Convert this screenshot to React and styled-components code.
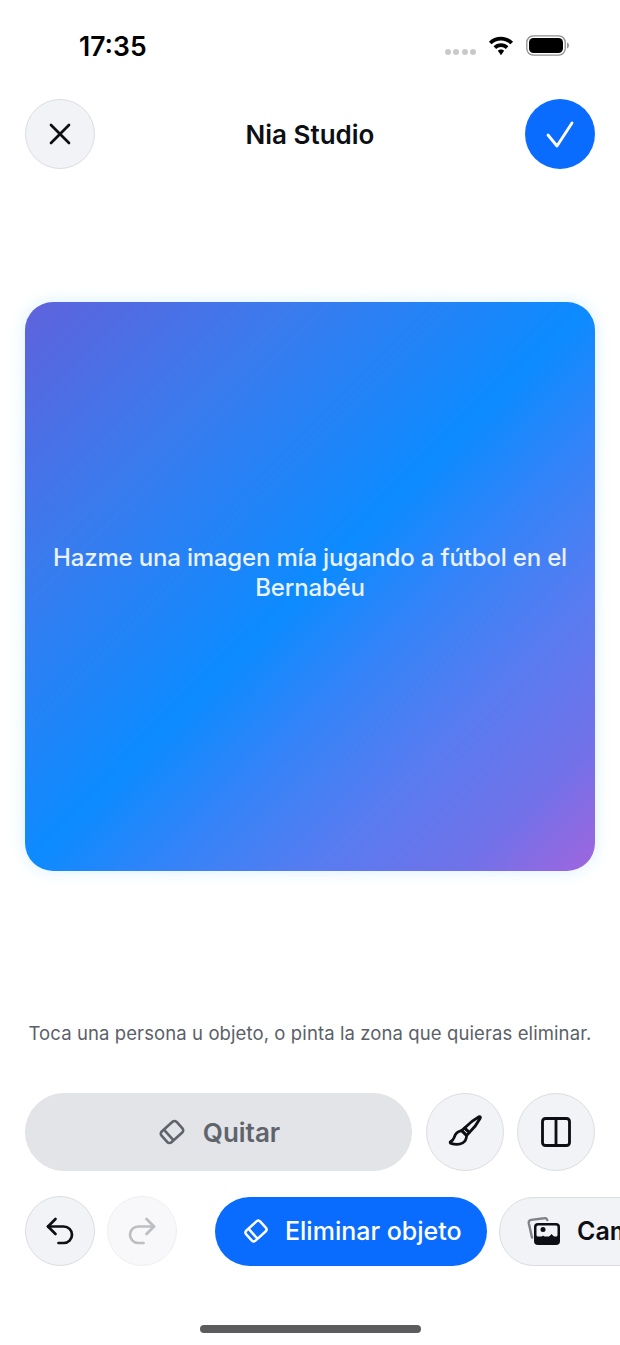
import React from 'react'
import styled, { createGlobalStyle } from 'styled-components'
import { X, Undo2, Redo2, Columns2 } from 'lucide-react'

const Global = createGlobalStyle`
  html, body { margin: 0; padding: 0; background: #fff; }
  * { box-sizing: border-box; }
`

const Screen = styled.div`
  width: 620px;
  height: 1345px;
  overflow: hidden;
  display: flex;
  flex-direction: column;
  background: #fff;
  font-family: Inter, "Liberation Sans", sans-serif;
  color: #0d0f14;
`

const StatusBar = styled.div`
  height: 99px;
  padding: 30px 51px 0 79px;
  display: flex;
  justify-content: space-between;
  align-items: flex-start;
`

const Clock = styled.span`
  font-size: 26.5px;
  line-height: 32px;
  font-weight: 600;
  color: #000;
`

const StatusIcons = styled.div`
  display: flex;
  align-items: center;
  gap: 12px;
  padding-top: 5px;
`

const Dots = styled.div`
  display: flex;
  gap: 2.500px;
  margin-top: 12px;
`

const Dot = styled.span`
  width: 6px;
  height: 6px;
  border-radius: 50%;
  background: #c9c9c9;
`

const Header = styled.header`
  display: flex;
  justify-content: space-between;
  align-items: center;
  padding: 0 25px;
`

const Title = styled.h1`
  margin: 0;
  font-size: 26px;
  font-weight: 600;
`

const Circle = styled.button`
  width: ${p => p.$size || 70}px;
  height: ${p => p.$size || 70}px;
  flex: none;
  padding: 0;
  border-radius: 50%;
  display: flex;
  align-items: center;
  justify-content: center;
  border: 1px solid ${p => (p.$faded ? '#eeeff1' : '#dcdde0')};
  background: ${p => (p.$faded ? '#f8f8fa' : '#f2f3f6')};
  color: ${p => (p.$faded ? '#bcbec2' : '#0d0f14')};
`

const ConfirmCircle = styled(Circle)`
  border: none;
  background: #0a6cff;
  color: #fff;
`

const Canvas = styled.div`
  margin: 133px 25px 0;
  height: 569px;
  border-radius: 28px;
  display: flex;
  align-items: center;
  justify-content: center;
  padding: 0 24px 28px;
  background: linear-gradient(135deg, #5f62dc 0%, #3a7bee 24%, #0c8bff 50%, #3583f8 62%, #5a7bf0 76%, #7072e9 88%, #a065de 100%);
  box-shadow: 0 0 16px rgba(120, 205, 255, 0.3);
`

const Prompt = styled.p`
  margin: 0;
  text-align: center;
  font-size: 24px;
  line-height: 30px;
  font-weight: 500;
  letter-spacing: -0.18px;
  color: #e9f2fd;
`

const Hint = styled.p`
  margin: 151px 0 0;
  text-align: center;
  font-size: 18.500px;
  line-height: 22px;
  color: #5b5f69;
  letter-spacing: 0.1px;
`

const ToolRow = styled.div`
  display: flex;
  align-items: center;
  gap: 13.500px;
  margin-top: 49px;
  padding: 0 25px;
`

const RemoveButton = styled.button`
  flex: 1;
  height: 78px;
  border-radius: 39px;
  display: flex;
  align-items: center;
  justify-content: center;
  gap: 16px;
  padding: 0;
  border: 1px solid #e2e3e5;
  background: #e3e4e8;
  color: #5f636c;
  font: 600 26px Inter, "Liberation Sans", sans-serif;
`

const ActionRow = styled.div`
  display: flex;
  align-items: center;
  gap: 12px;
  margin-top: 25px;
  padding-left: 25px;
`

const Pill = styled.button`
  flex: none;
  width: ${p => (p.$primary ? '272px' : 'auto')};
  height: 69px;
  border-radius: 35px;
  display: flex;
  align-items: center;
  gap: ${p => (p.$primary ? 15 : 17)}px;
  padding: 0 0 0 27px;
  white-space: nowrap;
  font: ${p => (p.$primary ? 500 : 600)} 25px Inter, "Liberation Sans", sans-serif;
  border: ${p => (p.$primary ? 'none' : '1px solid #dcdde0')};
  background: ${p => (p.$primary ? '#0a6cff' : '#f2f3f6')};
  color: ${p => (p.$primary ? '#fff' : '#0d0f14')};
  margin-left: ${p => p.$gapBefore || 0}px;
`

const HomeIndicator = styled.div`
  width: 221px;
  height: 8px;
  border-radius: 4px;
  background: #5c5c5f;
  margin: 59px auto 0;
`

const Wifi = () => (
  <svg width="26" height="20" viewBox="0 0 28 21">
    <path d="M14 0.500C8.900 0.500 4.300 2.500 1 5.800l2.800 2.900C6.400 6.100 10 4.500 14 4.500s7.600 1.600 10.200 4.200L27 5.800C23.700 2.500 19.100 0.500 14 0.500z" fill="#000" />
    <path d="M14 7.500c-3.100 0-5.900 1.200-8 3.300l2.800 2.900c1.400-1.300 3.200-2.200 5.200-2.200s3.800 0.900 5.200 2.200l2.800-2.900c-2.100-2.100-4.900-3.300-8-3.300z" fill="#000" />
    <path d="M14 14.200c-1.300 0-2.500 0.500-3.400 1.400L14 20.500l3.400-4.900c-0.900-0.900-2.100-1.400-3.400-1.400z" fill="#000" />
  </svg>
)

const Battery = () => (
  <svg width="43" height="21" viewBox="0 0 43 21">
    <rect x="0.800" y="0.800" width="38.400" height="19.400" rx="6.500" fill="none" stroke="#8e8e8e" strokeWidth="1.300" />
    <rect x="3" y="3" width="34" height="15" rx="4.500" fill="#000" />
    <path d="M41 7.500c1.300 0.400 2 1.600 2 3s-0.700 2.600-2 3z" fill="#9a9a9a" />
  </svg>
)

const Eraser = ({ size = 30 }) => (
  <svg width={size} height={size} viewBox="0 0 31 30" fill="none" stroke="currentColor" strokeWidth="2.700" strokeLinejoin="round">
    <g transform="rotate(-42 15.500 15)">
      <rect x="5" y="7.500" width="21" height="15" rx="3" />
      <path d="M11 7.500V22.500" />
    </g>
  </svg>
)

const Brush = () => (
  <svg width="36" height="36" viewBox="0 0 36 36" fill="none" stroke="currentColor" strokeWidth="2.800" strokeLinejoin="round" strokeLinecap="round">
    <path d="M32 2.800c0.900-0.500 1.700 0.300 1.300 1.200-2.300 4.400-6.700 10.500-11 14.600l-4.700-4.600C21.700 9.800 27.600 5.200 32 2.800z" />
    <path d="M17.600 14l4.700 4.600-2.700 2.900-5-4.900z" />
    <path d="M14.600 16.600l5 4.900c-0.200 3.300-1.400 6-3.800 7.400-3.100 1.800-8 1.700-11.800 0.500-1-0.300-1.200-1.300-0.400-1.800 2-0.900 2.900-2.100 3.600-4.200 1-3.500 3.600-6.200 7.400-6.800z" />
  </svg>
)

const Gallery = () => (
  <svg width="33" height="28" viewBox="0 0 33 28">
    <path d="M5 20.500 1.800 6.300a3 3 0 0 1 2.400-3.400L17 1.200a3 3 0 0 1 3.300 1.900" fill="none" stroke="#7f8288" strokeWidth="2.400" strokeLinecap="round" />
    <rect x="7" y="6" width="26" height="22" rx="4" fill="#0d0f14" />
    <rect x="9.500" y="8.500" width="21" height="11" rx="1.500" fill="#f2f3f6" />
    <circle cx="16" cy="12.500" r="2.500" fill="#0d0f14" />
    <path d="M9 25.500l7-7 4 3.500 4.500-5 7 7V27H9z" fill="#0d0f14" />
  </svg>
)

const Confirm = () => (
  <svg width="34" height="34" viewBox="0 0 34 34" fill="none" stroke="currentColor" strokeWidth="2.800" strokeLinecap="round" strokeLinejoin="round">
    <path d="M5 18 14 29 29 6" />
  </svg>
)

const App = () => {
  return (
    <Screen>
      <Global />
      <StatusBar>
        <Clock>17:35</Clock>
        <StatusIcons>
          <Dots>
            <Dot /><Dot /><Dot /><Dot />
          </Dots>
          <Wifi />
          <Battery />
        </StatusIcons>
      </StatusBar>

      <Header>
        <Circle><X size={36} strokeWidth={1.8} /></Circle>
        <Title>Nia Studio</Title>
        <ConfirmCircle><Confirm /></ConfirmCircle>
      </Header>

      <Canvas>
        <Prompt>Hazme una imagen mía jugando a fútbol en el Bernabéu</Prompt>
      </Canvas>

      <Hint>Toca una persona u objeto, o pinta la zona que quieras eliminar.</Hint>

      <ToolRow>
        <RemoveButton><Eraser />Quitar</RemoveButton>
        <Circle $size={78}><Brush /></Circle>
        <Circle $size={78}><Columns2 size={36} strokeWidth={1.9} /></Circle>
      </ToolRow>

      <ActionRow>
        <Circle><Undo2 size={36} strokeWidth={1.8} /></Circle>
        <Circle $faded><Redo2 size={36} strokeWidth={1.8} /></Circle>
        <Pill $primary $gapBefore={26}><Eraser size={28} />Eliminar objeto</Pill>
        <Pill><Gallery />Cambiar fondo</Pill>
      </ActionRow>

      <HomeIndicator />
    </Screen>
  )
}

export default App
